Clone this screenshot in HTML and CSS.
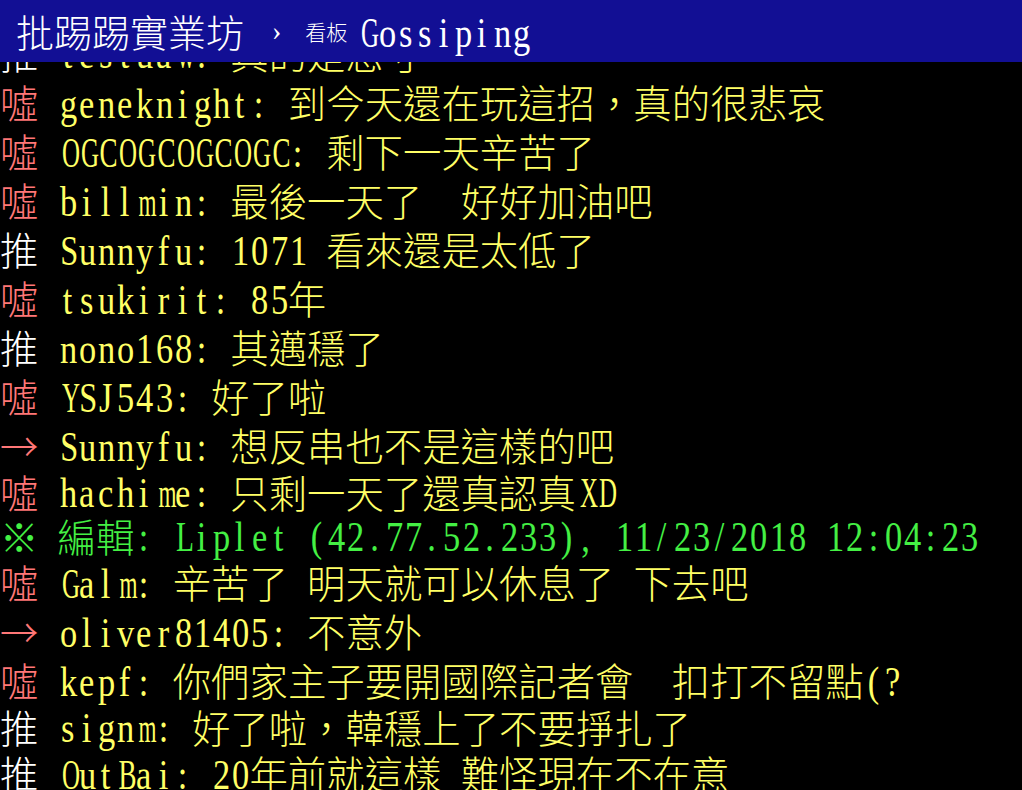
FILE: index.html
```html
<!DOCTYPE html>
<html lang="zh-Hant">
<head>
    <meta charset="UTF-8">
    <title>批踢踢實業坊 - 看板 Gossiping</title>
    <link rel="stylesheet" href="styles.css">
</head>
<body>
    <!-- barra do topo, fica por cima do texto -->
    <div class="bar">
        <span class="c site">批踢踢實業坊</span>
        <span class="sep">›</span>
        <span class="c boardLabel">看板</span>
        <span class="a board">Gossiping</span>
    </div>

    <div class="screen">
        <div class="row tall"><span class="c push">推</span><span class="a user"> testuaw: </span><span class="c msg">真的是惡寸</span></div>
        <div class="row"><span class="c boo">噓</span><span class="a user"> geneknight: </span><span class="c msg">到今天還在玩這招，真的很悲哀</span></div>
        <div class="row"><span class="c boo">噓</span><span class="a user"> OGCOGCOGCOGC: </span><span class="c msg">剩下一天辛苦了</span></div>
        <div class="row"><span class="c boo">噓</span><span class="a user"> billmin: </span><span class="c msg">最後一天了</span><span class="a msg">  </span><span class="c msg">好好加油吧</span></div>
        <div class="row"><span class="c push">推</span><span class="a user"> Sunnyfu: </span><span class="a msg">1071 </span><span class="c msg">看來還是太低了</span></div>
        <div class="row"><span class="c boo">噓</span><span class="a user"> tsukirit: </span><span class="a msg">85</span><span class="c msg">年</span></div>
        <div class="row"><span class="c push">推</span><span class="a user"> nono168: </span><span class="c msg">其邁穩了</span></div>
        <div class="row"><span class="c boo">噓</span><span class="a user"> YSJ543: </span><span class="c msg">好了啦</span></div>
        <div class="row"><span class="c boo arrow">→</span><span class="a user"> Sunnyfu: </span><span class="c msg">想反串也不是這樣的吧</span></div>
        <div class="row short"><span class="c boo">噓</span><span class="a user"> hachime: </span><span class="c msg">只剩一天了還真認真</span><span class="a msg">XD</span></div>
        <div class="row short edit"><span class="c">※</span><span class="a"> </span><span class="c">編輯</span><span class="a">: Liplet (42.77.52.233), 11/23/2018 12:04:23</span></div>
        <div class="row"><span class="c boo">噓</span><span class="a user"> Galm: </span><span class="c msg">辛苦了</span><span class="a msg"> </span><span class="c msg">明天就可以休息了</span><span class="a msg"> </span><span class="c msg">下去吧</span></div>
        <div class="row"><span class="c boo arrow">→</span><span class="a user"> oliver81405: </span><span class="c msg">不意外</span></div>
        <div class="row"><span class="c boo">噓</span><span class="a user"> kepf: </span><span class="c msg">你們家主子要開國際記者會</span><span class="a msg">  </span><span class="c msg">扣打不留點</span><span class="a msg">(?</span></div>
        <div class="row short"><span class="c push">推</span><span class="a user"> signm: </span><span class="c msg">好了啦，韓穩上了不要掙扎了</span></div>
        <div class="row"><span class="c push">推</span><span class="a user"> OutBai: </span><span class="a msg">20</span><span class="c msg">年前就這樣</span><span class="a msg"> </span><span class="c msg">難怪現在不在意</span></div>
    </div>

    <script src="script.js"></script>
</body>
</html>
```

FILE: styles.css
```css
/* Tela do terminal */
body {
    margin: 0;
    background-color: #000000;
    overflow: hidden;
}

/* Barra azul do topo */
.bar {
    position: fixed;
    top: 0px;
    left: 0px;
    right: 0px;
    height: 62px;
    padding-left: 16px;
    background-color: #120f94;
    color: #FFFFFF;
    display: flex;
    align-items: center;
    white-space: pre;
    z-index: 10;
}

.bar .site {
    font-size: 38px;
}

.bar .sep {
    font-family: "Liberation Serif", serif;
    font-size: 28px;
    margin: 0 24px 0 28px;
}

.bar .boardLabel {
    font-size: 21px;
    margin-right: 10px;
}

/* Linhas de texto */
.screen {
    padding-top: 27px;
}

.row {
    height: 49px;
    display: flex;
    align-items: center;
    white-space: pre;
}

.row.tall {
    height: 50px;
}

.row.short {
    height: 44px;
}

/* fonte larga (chines) */
.c {
    font-family: "Noto Sans CJK TC", sans-serif;
    font-size: 38.4px;
    font-weight: 300;
    line-height: 1;
}

/* fonte estreita (ascii), uma celula por letra */
.a {
    display: inline-flex;
    font-family: "Liberation Serif", serif;
    font-size: 43px;
    line-height: 1;
    margin-top: 3px;
}

.a .ch {
    display: inline-block;
    width: 19.2px;
    text-align: center;
    transform: scaleX(0.8);
}

.arrow {
    display: inline-block;
    width: 38.4px;
}

/* cores */
.push {
    color: #FFFFFF;
}

.boo {
    color: #ff7777;
}

.user, .msg {
    color: #ffff66;
}

.edit {
    color: #44f044;
}
```

FILE: script.js
```js
// quebra o texto ascii em celulas de largura fixa, como no terminal
var ctx = document.createElement('canvas').getContext('2d');
ctx.font = '43px "Liberation Serif"';

var runs = document.querySelectorAll('.a');
for (var i = 0; i < runs.length; i++) {
    var text = runs[i].textContent;
    runs[i].textContent = '';
    for (var j = 0; j < text.length; j++) {
        var cell = document.createElement('span');
        cell.className = 'ch';
        cell.textContent = text[j] === ' ' ? '\u00a0' : text[j];
        // letra larga demais (m, w, M...) e apertada para caber na celula
        var w = ctx.measureText(text[j]).width;
        if (w * 0.8 > 18) {
            cell.style.transform = 'scaleX(' + (18 / w).toFixed(3) + ')';
        }
        runs[i].appendChild(cell);
    }
}
```
